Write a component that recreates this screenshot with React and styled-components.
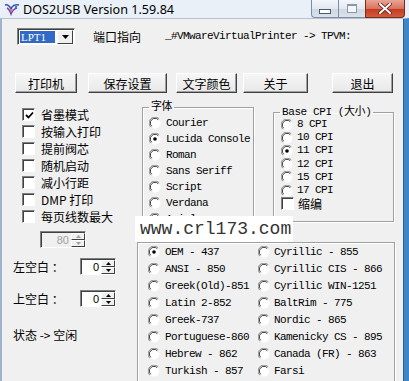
import styled, { createGlobalStyle } from "styled-components";

const GlobalStyle = createGlobalStyle`
  html, body { margin: 0; padding: 0; background: #fff; }
  body { font-family: "Noto Sans CJK SC", "Noto Sans", sans-serif; }
`;

const MONO = `"Liberation Mono", "Noto Sans CJK SC", monospace`;
const CJK = `"Noto Sans CJK SC", "Noto Sans", sans-serif`;

const fonts = ["Courier", "Lucida Console", "Roman", "Sans Seriff", "Script", "Verdana", "Arial"];
const cpis = ["8 CPI", "10 CPI", "11 CPI", "12 CPI", "15 CPI", "17 CPI"];
const pagesLeft = ["OEM - 437", "ANSI - 850", "Greek(Old)-851", "Latin 2-852", "Greek-737", "Portuguese-860", "Hebrew - 862", "Turkish - 857"];
const pagesRight = ["Cyrillic - 855", "Cyrillic CIS - 866", "Cyrillic WIN-1251", "BaltRim - 775", "Nordic - 865", "Kamenicky CS - 895", "Canada (FR) - 863", "Farsi"];
const options = [
  { label: "省墨模式", checked: true },
  { label: "按输入打印" },
  { label: "提前阀芯" },
  { label: "随机启动" },
  { label: "减小行距" },
  { label: "DMP 打印" },
  { label: "每页线数最大" },
];
const buttons = [
  { text: "打印机", w: 62, ml: 0 },
  { text: "保存设置", w: 79, ml: 11 },
  { text: "文字颜色", w: 61, ml: 9 },
  { text: "关于", w: 65, ml: 6 },
  { text: "退出", w: 61, ml: 24 },
];

function Radio({ on }) {
  return (
    <svg width="12" height="12" viewBox="0 0 12 12">
      <circle cx="6" cy="6" r="5.5" fill="#fff" />
      <path d="M10.2 1.8 A5.5 5.5 0 0 0 1.8 10.2" stroke="#8a8a8a" strokeWidth="1" fill="none" />
      <path d="M9.3 2.7 A4.5 4.5 0 0 0 2.7 9.3" stroke="#3a3a3a" strokeWidth="1" fill="none" />
      {on && <circle cx="6" cy="6" r="1.8" fill="#000" />}
    </svg>
  );
}

function Check({ on }) {
  return (
    <CheckBox>
      {on && (
        <svg width="9" height="9" viewBox="0 0 9 9">
          <path d="M1 4 L3.5 6.5 L8 1.5" stroke="#000" strokeWidth="1.8" fill="none" />
        </svg>
      )}
    </CheckBox>
  );
}

function Spin({ value, disabled, width }) {
  return (
    <SpinBox $disabled={disabled} $w={width}>
      <SpinValue $disabled={disabled}>{value}</SpinValue>
      <SpinArrows>
        <SpinBtn>
          <svg width="5" height="3" viewBox="0 0 5 3"><path d="M0 3 L2.5 0 L5 3Z" fill={disabled ? "#a0a0a0" : "#000"} /></svg>
        </SpinBtn>
        <SpinBtn>
          <svg width="5" height="3" viewBox="0 0 5 3"><path d="M0 0 L2.5 3 L5 0Z" fill={disabled ? "#a0a0a0" : "#000"} /></svg>
        </SpinBtn>
      </SpinArrows>
    </SpinBox>
  );
}

export default function App() {
  return (
    <>
      <GlobalStyle />
      <Window>
        <TitleBar>
          <svg width="16" height="14" viewBox="0 0 16 14">
            <path d="M1 3 C4 2 6 5 7 7 C8 4 11 2 15 3" stroke="#3c4fb5" strokeWidth="1.6" fill="none" />
            <path d="M3 6 C5 7 6 9 7 12 C8 9 10 7 13 6" stroke="#7d3fa8" strokeWidth="1.4" fill="none" />
            <path d="M6 8 L9 8" stroke="#d08a2a" strokeWidth="1.4" />
            <circle cx="12" cy="5" r="1.2" fill="#2a8ad0" />
          </svg>
          <Title>DOS2USB Version 1.59.84</Title>
          <Caption>
            <CapBtn $first>
              <MinGlyph />
            </CapBtn>
            <CapBtn>
              <MaxGlyph />
            </CapBtn>
            <CloseBtn>
              <svg width="14" height="11" viewBox="0 0 14 11">
                <path d="M2 1 L12 10 M12 1 L2 10" stroke="#5a1a10" strokeWidth="3.6" strokeLinecap="round" />
                <path d="M2 1 L12 10 M12 1 L2 10" stroke="#fff" strokeWidth="2" strokeLinecap="round" />
              </svg>
            </CloseBtn>
          </Caption>
        </TitleBar>

        <Client>
          <TopRow>
            <Combo>
              <ComboText>LPT1</ComboText>
              <ComboDrop>
                <svg width="7" height="4" viewBox="0 0 7 4"><path d="M0 0 L7 0 L3.5 4Z" fill="#000" /></svg>
              </ComboDrop>
            </Combo>
            <Label $ml={18}>端口指向</Label>
            <MonoText $ml={24}>_#VMwareVirtualPrinter -&gt; TPVM:</MonoText>
          </TopRow>

          <ButtonRow>
            {buttons.map(b => (
              <Button key={b.text} $w={b.w} $ml={b.ml}>{b.text}</Button>
            ))}
          </ButtonRow>

          <Body>
            <LeftCol>
              <CheckList>
                {options.map(o => (
                  <CheckRow key={o.label}>
                    <Check on={o.checked} />
                    <Label $ml={6}>{o.label}</Label>
                  </CheckRow>
                ))}
              </CheckList>
              <SpinRow $mt={6} $pl={38}>
                <Spin value="80" disabled width={46} />
              </SpinRow>
              <SpinRow $mt={10} $pl={11}>
                <MarginLabel>左空白 ：</MarginLabel>
                <Spin value="0" width={36} />
              </SpinRow>
              <SpinRow $mt={15} $pl={11}>
                <MarginLabel>上空白 ：</MarginLabel>
                <Spin value="0" width={36} />
              </SpinRow>
              <Status>状态 -&gt; 空闲</Status>
            </LeftCol>

            <RightArea>
              <GroupRow>
                <Group $w={112} $h={132} $ml={5} $mt={8}>
                  <Legend>字体</Legend>
                  <OptionList $pl={6} $pt={2}>
                    {fonts.map((f, i) => (
                      <OptionRow key={f} $h={16}>
                        <Radio on={i === 1} />
                        <MonoText $ml={5}>{f}</MonoText>
                      </OptionRow>
                    ))}
                  </OptionList>
                </Group>
                <Group $w={121} $h={116} $ml={19} $mt={13}>
                  <Legend>Base CPI (大小)</Legend>
                  <OptionList $pl={7} $pt={0}>
                    {cpis.map((c, i) => (
                      <OptionRow key={c} $h={13.2}>
                        <Radio on={i === 2} />
                        <MonoText $ml={4}>{c}</MonoText>
                      </OptionRow>
                    ))}
                    <OptionRow $h={13.2}>
                      <Check />
                      <Label $ml={4}>缩编</Label>
                    </OptionRow>
                  </OptionList>
                </Group>
              </GroupRow>

              <PageGroup>
                <PageColumn $w={110}>
                  {pagesLeft.map((p, i) => (
                    <OptionRow key={p} $h={17}>
                      <Radio on={i === 0} />
                      <MonoText $ml={5}>{p}</MonoText>
                    </OptionRow>
                  ))}
                </PageColumn>
                <PageColumn>
                  {pagesRight.map(p => (
                    <OptionRow key={p} $h={17}>
                      <Radio />
                      <MonoText $ml={4}>{p}</MonoText>
                    </OptionRow>
                  ))}
                </PageColumn>
              </PageGroup>
            </RightArea>
          </Body>
        </Client>

        <Watermark>www.crl173.com</Watermark>
      </Window>
    </>
  );
}

const Window = styled.div`
  position: relative;
  width: 409px;
  height: 381px;
  overflow: hidden;
  display: flex;
  flex-direction: column;
  background: linear-gradient(#eaf0f7, #dbe4ee);
`;

const TitleBar = styled.div`
  height: 21px;
  display: flex;
  align-items: center;
  padding-left: 4px;
  svg { flex-shrink: 0; }
`;

const Title = styled.div`
  margin-left: 3px;
  font-family: "Noto Sans", "Liberation Sans", sans-serif;
  font-size: 12.6px;
  color: #000;
  white-space: nowrap;
`;

const Caption = styled.div`
  margin-left: auto;
  margin-right: 4px;
  align-self: flex-start;
  display: flex;
`;

const CapBtn = styled.div`
  width: 27px;
  height: 18px;
  box-sizing: border-box;
  border: 1px solid #7d8ea4;
  border-top: none;
  border-right: none;
  border-bottom-left-radius: ${p => (p.$first ? "4px" : "0")};
  background: linear-gradient(#f3f6fa 0%, #e3e9f0 50%, #cdd7e2 51%, #dbe3ec 100%);
  display: flex;
  justify-content: center;
  align-items: center;
`;

const MinGlyph = styled.div`
  width: 10px;
  height: 3px;
  margin-top: 5px;
  background: #fff;
  border: 1px solid #4a5a70;
`;

const MaxGlyph = styled.div`
  width: 8px;
  height: 6px;
  border: 1px solid #8a98aa;
  border-top-width: 2px;
  background: #f4f6f8;
`;

const CloseBtn = styled.div`
  width: 40px;
  height: 18px;
  box-sizing: border-box;
  border: 1px solid #7a2c1d;
  border-top: none;
  border-bottom-right-radius: 4px;
  background: linear-gradient(#e9a597 0%, #d8735f 50%, #c2391f 51%, #d35a3c 100%);
  display: flex;
  justify-content: center;
  align-items: center;
`;

const Client = styled.div`
  flex: 1;
  display: flex;
  flex-direction: column;
  background: #f0f0f0;
  border-top: 1px solid #b6c2d0;
  border-left: 2px solid #9fb4cc;
  border-right: 5px solid #3f86c8;
  box-shadow: inset -1px 0 0 #2a5f95;
`;

const TopRow = styled.div`
  margin-top: 9px;
  height: 17px;
  padding-left: 15px;
  display: flex;
  align-items: center;
`;

const Combo = styled.div`
  width: 58px;
  height: 17px;
  box-sizing: border-box;
  display: flex;
  align-items: center;
  background: #fff;
  border: 1px solid;
  border-color: #808080 #fff #fff #808080;
  box-shadow: inset 1px 1px 0 #404040;
  padding: 1px 1px 0 2px;
`;

const ComboText = styled.div`
  flex: 1;
  height: 12px;
  line-height: 12px;
  padding-left: 1px;
  background: #3169c6;
  color: #fff;
  font-family: "Liberation Serif", serif;
  font-size: 11px;
`;

const ComboDrop = styled.div`
  width: 16px;
  height: 14px;
  margin-left: 2px;
  box-sizing: border-box;
  background: #f0f0f0;
  border: 1px solid;
  border-color: #fff #404040 #404040 #fff;
  display: flex;
  justify-content: center;
  align-items: center;
`;

const Label = styled.span`
  margin-left: ${p => p.$ml || 0}px;
  font-family: ${CJK};
  font-size: 12px;
  line-height: 14px;
  color: #000;
  white-space: nowrap;
`;

const MonoText = styled.span`
  margin-left: ${p => p.$ml || 0}px;
  font-family: ${MONO};
  font-size: 11px;
  letter-spacing: -0.6px;
  line-height: 13px;
  color: #000;
  white-space: nowrap;
`;

const ButtonRow = styled.div`
  margin-top: 28px;
  height: 20px;
  padding-left: 13px;
  display: flex;
`;

const Button = styled.div`
  width: ${p => p.$w}px;
  margin-left: ${p => p.$ml}px;
  box-sizing: border-box;
  display: flex;
  justify-content: center;
  align-items: center;
  background: linear-gradient(#f6f6f6, #e8e8e8);
  border: 1px solid;
  border-color: #fff #404040 #404040 #fff;
  box-shadow: inset -1px -1px 0 #a0a0a0;
  font-family: ${CJK};
  font-size: 12px;
`;

const Body = styled.div`
  display: flex;
  flex: 1;
`;

const LeftCol = styled.div`
  width: 135px;
  display: flex;
  flex-direction: column;
`;

const CheckList = styled.div`
  padding-top: 13px;
  padding-left: 20px;
  display: flex;
  flex-direction: column;
`;

const CheckRow = styled.div`
  height: 17px;
  display: flex;
  align-items: center;
`;

const CheckBox = styled.div`
  width: 13px;
  height: 13px;
  box-sizing: border-box;
  flex-shrink: 0;
  background: #fff;
  border: 1px solid;
  border-color: #808080 #fff #fff #808080;
  box-shadow: inset 1px 1px 0 #404040;
  display: flex;
  justify-content: center;
  align-items: center;
  padding: 1px 0 0 1px;
`;

const SpinRow = styled.div`
  margin-top: ${p => p.$mt}px;
  padding-left: ${p => p.$pl}px;
  display: flex;
  align-items: center;
`;

const MarginLabel = styled.span`
  width: 67px;
  font-family: ${CJK};
  font-size: 12px;
  white-space: pre;
`;

const SpinBox = styled.div`
  width: ${p => p.$w}px;
  height: 17px;
  box-sizing: border-box;
  display: flex;
  background: ${p => (p.$disabled ? "#f0f0f0" : "#fff")};
  border: 1px solid;
  border-color: #808080 #fff #fff #808080;
  box-shadow: inset 1px 1px 0 #404040;
  padding: 1px 0 0 1px;
`;

const SpinValue = styled.div`
  flex: 1;
  text-align: right;
  padding-right: 2px;
  font-family: "Liberation Sans", sans-serif;
  font-size: 11px;
  line-height: 14px;
  color: ${p => (p.$disabled ? "#a0a0a0" : "#000")};
`;

const SpinArrows = styled.div`
  width: 14px;
  display: flex;
  flex-direction: column;
`;

const SpinBtn = styled.div`
  flex: 1;
  box-sizing: border-box;
  background: #f0f0f0;
  border: 1px solid;
  border-color: #fff #404040 #404040 #fff;
  display: flex;
  justify-content: center;
  align-items: center;
  svg { display: block; }
`;

const Status = styled.div`
  margin-top: 20px;
  padding-left: 11px;
  font-family: ${CJK};
  font-size: 12px;
  line-height: 16px;
`;

const RightArea = styled.div`
  display: flex;
  flex-direction: column;
`;

const GroupRow = styled.div`
  display: flex;
  align-items: flex-start;
`;

const Group = styled.fieldset`
  width: ${p => p.$w}px;
  height: ${p => p.$h}px;
  margin: ${p => p.$mt}px 0 0 ${p => p.$ml}px;
  padding: 0;
  box-sizing: border-box;
  border: 1px solid #a0a0a0;
  box-shadow: inset 1px 1px 0 #fff, 1px 1px 0 #fff;
  min-width: 0;
`;

const Legend = styled.legend`
  margin-left: 6px;
  padding: 0 2px;
  font-family: ${MONO};
  font-size: 11px;
  letter-spacing: -0.4px;
  line-height: 12px;
  color: #000;
  white-space: nowrap;
`;

const OptionList = styled.div`
  padding-left: ${p => p.$pl}px;
  padding-top: ${p => p.$pt}px;
  display: flex;
  flex-direction: column;
`;

const OptionRow = styled.div`
  height: ${p => p.$h}px;
  display: flex;
  align-items: center;
  svg { flex-shrink: 0; }
`;

const PageGroup = styled.div`
  margin-top: 9px;
  width: 258px;
  height: 160px;
  box-sizing: border-box;
  border: 1px solid #a0a0a0;
  box-shadow: inset 1px 1px 0 #fff, 1px 1px 0 #fff;
  padding: 0.5px 0 0 10px;
  display: flex;
`;

const PageColumn = styled.div`
  width: ${p => (p.$w ? `${p.$w}px` : "auto")};
  display: flex;
  flex-direction: column;
`;

const Watermark = styled.div`
  position: absolute;
  left: 135px;
  top: 216px;
  width: 158px;
  height: 26px;
  background: #fff;
  padding-left: 5px;
  box-sizing: border-box;
  font-family: "Liberation Mono", monospace;
  font-size: 18px;
  line-height: 27px;
  color: #333;
  white-space: nowrap;
`;
